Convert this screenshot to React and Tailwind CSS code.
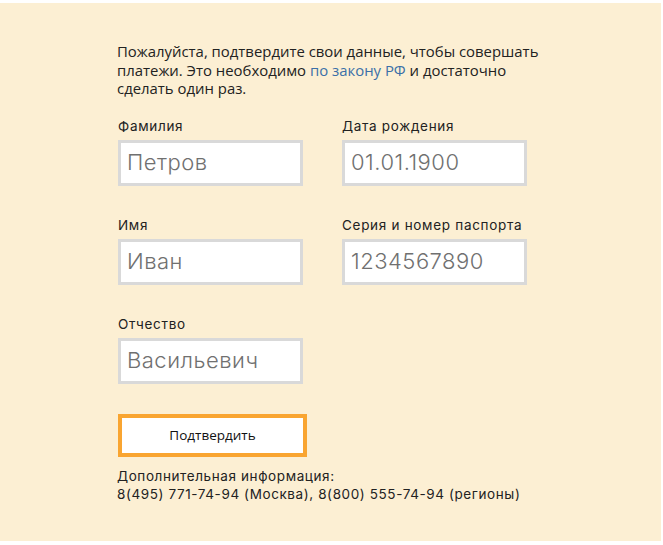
import React from "react";

function Field({ label, value }) {
  return (
    <div className="flex flex-col">
      <div className="h-[18px] text-[13.5px] leading-[18px] tracking-[0.7px] text-[#222]">
        {label}
      </div>
      <div className="mt-[5px] h-[46px] w-[185px] border-[3px] border-[#d9d9d9] bg-white pl-[6px] flex items-center text-[22px] tracking-[0.5px] font-light text-[#707070]">
        {value}
      </div>
    </div>
  );
}

export default function App() {
  return (
    <div className="w-[663px] h-[545px] bg-white pt-[3px] pr-[2px] pb-[4px]">
      <div className="h-full bg-[#fcefd3] pl-[117px] pt-[39px] font-['Inter',sans-serif]">
        <p className="w-[428px] text-[14.9px] leading-[18.5px] text-[#222] font-['Open_Sans',sans-serif]">
          Пожалуйста, подтвердите свои данные, чтобы совершать платежи. Это необходимо{" "}
          <span className="text-[#3b6fa8]">по закону РФ</span> и достаточно сделать один раз.
        </p>
        <div className="mt-[19px] ml-[1px] grid grid-cols-[185px_185px] gap-x-[39px] gap-y-[30px]">
          <Field label="Фамилия" value="Петров" />
          <Field label="Дата рождения" value="01.01.1900" />
          <Field label="Имя" value="Иван" />
          <Field label="Серия и номер паспорта" value="1234567890" />
          <Field label="Отчество" value="Васильевич" />
        </div>
        <button className="mt-[30px] ml-[1px] h-[43px] w-[189px] border-[4px] border-[#f9a531] bg-white text-[13.5px] text-[#111] font-['Open_Sans',sans-serif]">
          Подтвердить
        </button>
        <div className="mt-[10px] text-[13.5px] leading-[18px] tracking-[0.6px] text-[#222]">
          <div>Дополнительная информация:</div>
          <div>8(495) 771-74-94 (Москва), 8(800) 555-74-94 (регионы)</div>
        </div>
      </div>
    </div>
  );
}
